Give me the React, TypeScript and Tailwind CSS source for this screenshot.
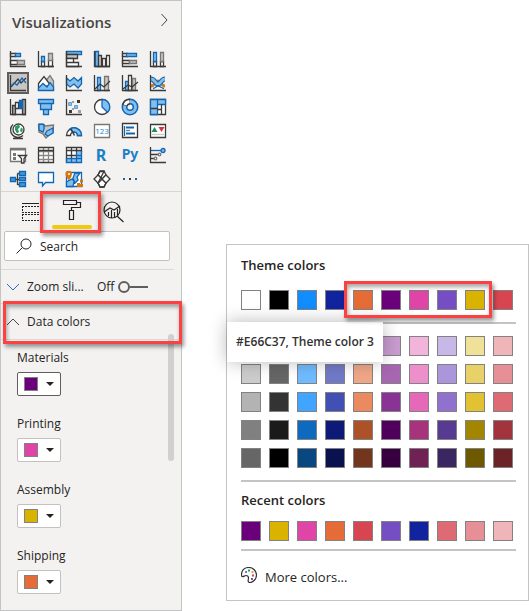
import type { ReactNode } from "react";

const D = "#3b3a39";
const B = "#1267b4";
const L = "#83beec";
const G = "#c8c6c4";

const axes = <path d="M.5 0V15.5H16" fill="none" stroke={D} />;

type Visual = { name: string; art: ReactNode };

const visuals: Visual[] = [
  {
    name: "Stacked bar chart",
    art: (
      <g>
        <path d="M.5 2.5H5.5V5.5H.5zM.5 9.5H7.5V13.5H.5z" fill="#fff" stroke={D} />
        <path d="M5.5 2.5H10.5V5.5H5.5z" fill={L} stroke={B} />
        <path d="M7.5 9.5H14.5V13.5H7.5z" fill={G} stroke="#797775" />
        {axes}
      </g>
    ),
  },
  {
    name: "Stacked column chart",
    art: (
      <g>
        <path d="M3.5 10.5H6.5V15.5H3.5zM10.5 8.5H14.5V15.5H10.5z" fill="#fff" stroke={D} />
        <path d="M3.5 5.5H6.5V10.5H3.5z" fill={L} stroke={B} />
        <path d="M10.5 2.5H14.5V9.5H10.5z" fill={G} stroke="#797775" />
        {axes}
      </g>
    ),
  },
  {
    name: "Clustered bar chart",
    art: (
      <g>
        <path d="M.5 .5H15.5V3.5H.5z" fill={L} stroke={B} />
        <path d="M.5 3.5H11.5V7.5H.5z" fill={G} stroke={D} />
        <path d="M.5 7.5H7.5V11.5H.5zM.5 11.5H12.5V15.5H.5z" fill="#fff" stroke={D} />
        {axes}
      </g>
    ),
  },
  {
    name: "Clustered column chart",
    art: (
      <g>
        <path d="M1.5 .5H4.5V15.5H1.5z" fill={L} stroke={B} />
        <path d="M4.5 4.5H7.5V15.5H4.5z" fill={G} stroke={D} />
        <path d="M8.5 7.5H11.5V15.5H8.5zM12.5 4.5H15.5V15.5H12.5z" fill="#fff" stroke={D} />
        {axes}
      </g>
    ),
  },
  {
    name: "100% stacked bar chart",
    art: (
      <g>
        <path d="M.5 2.5H5.5V5.5H.5zM.5 9.5H7.5V12.5H.5z" fill="#fff" stroke={D} />
        <path d="M4.5 2.5H14.5V5.5H4.5z" fill={L} stroke={B} />
        <path d="M7.5 9.5H14.5V12.5H7.5z" fill={G} stroke="#797775" />
        {axes}
      </g>
    ),
  },
  {
    name: "100% stacked column chart",
    art: (
      <g>
        <path d="M3.5 10.5H6.5V15.5H3.5zM10.5 10.5H13.5V15.5H10.5z" fill="#fff" stroke={D} />
        <path d="M3.5 1.5H6.5V10.5H3.5z" fill={L} stroke={B} />
        <path d="M10.5 1.5H13.5V10.5H10.5z" fill={G} stroke="#797775" />
        {axes}
      </g>
    ),
  },
  {
    name: "Line chart",
    art: (
      <g fill="none">
        <path d="M1 12 8 4 11 8 16 3" stroke={D} />
        <path d="M1 11 4 8 7 10 12 3 16 8" stroke={B} />
        {axes}
      </g>
    ),
  },
  {
    name: "Area chart",
    art: (
      <g>
        <path d="M5 9 12 .5 15.5 6V15H5z" fill={G} stroke="#797775" />
        <path d="M.5 8.5 6 1.5 12 9.500 .5 15z" fill="#fff" stroke={D} />
        <path d="M.5 15.5V13L5 8.5 9 12 12 7.5 15.5 12V15.5z" fill={L} stroke={B} />
      </g>
    ),
  },
  {
    name: "Stacked area chart",
    art: (
      <g>
        <path d="M.5 3 4 6 8 2.5 12 6 15.5 2.5V9L12 13 8 9 4 12 .5 9z" fill={L} stroke={B} />
        {axes}
      </g>
    ),
  },
  {
    name: "Line and stacked column chart",
    art: (
      <g>
        <path d="M3.5 2.5H6.5V15.5H3.5z" fill={L} stroke={B} />
        <path d="M10.5 1.5H14.5V15.5H10.5z" fill={G} stroke="#797775" />
        <path d="M1 14 6 9 10 12 16 6" fill="none" stroke={D} />
        {axes}
      </g>
    ),
  },
  {
    name: "Line and clustered column chart",
    art: (
      <g>
        <path d="M3.5 6.5H6.5V15.5H3.5z" fill={L} stroke={B} />
        <path d="M6.5 .5H9.5V15.5H6.5z" fill="#fff" stroke={D} />
        <path d="M10.5 3.5H13.5V15.5H10.5z" fill={G} stroke="#797775" />
        <path d="M1 14 6 10 10 12 16 7" fill="none" stroke={D} />
        {axes}
      </g>
    ),
  },
  {
    name: "Ribbon chart",
    art: (
      <g>
        <path d="M1 11C5 11 5 6 8 6S11 11 15 11" fill="none" stroke="#d87a1c" strokeWidth="3" />
        <path d="M1 4C5 4 5 9 8 9S11 4 15 4" fill="none" stroke={B} strokeWidth="5" />
        <path d="M1 4C5 4 5 9 8 9S11 4 15 4" fill="none" stroke={L} strokeWidth="3" />
        <path d="M3 13.5C6 13 6 11 8 11S11 13 14 13.5" fill="none" stroke={B} />
        {axes}
      </g>
    ),
  },
  {
    name: "Waterfall chart",
    art: (
      <g>
        <path d="M2.5 6.5H5.5V15.5H2.5zM12.5 .5H15.5V15.5H12.5z" fill="#a19f9d" stroke={D} />
        <path d="M5.5 3.5H8.5V9.5H5.5z" fill="#fff" stroke={D} />
        <path d="M9.5 1.5H12.5V9.5H9.5z" fill={B} stroke={B} />
        {axes}
      </g>
    ),
  },
  {
    name: "Funnel chart",
    art: (
      <g fill={L} stroke={B}>
        <path d="M.5 .5H15.5V4.5H.5zM2.5 4.5H13.5V10.5H2.5zM5.5 10.5H10.5V15.5H5.5z" />
      </g>
    ),
  },
  {
    name: "Scatter chart",
    art: (
      <g>
        <path d="M11 1H14V4H11zM3 11H6V14H3z" fill={D} />
        <path d="M2.500 3.5H5.5V6.5H2.500zM8.500 6.5H11.500V9.5H8.500z" fill={L} stroke={B} strokeWidth=".5" />
        <path d="M6 2H8V4H6zM12 11H15V14H12zM6 9H8V11H6z" fill="#a19f9d" />
        {axes}
      </g>
    ),
  },
  {
    name: "Pie chart",
    art: (
      <g>
        <circle cx="8" cy="8" r="7.5" fill="#fff" stroke={D} />
        <path d="M8 8V.5A7.5 7.5 0 0 1 13.5 13.3z" fill={L} stroke={B} />
      </g>
    ),
  },
  {
    name: "Donut chart",
    art: (
      <g>
        <circle cx="8" cy="8" r="5.5" fill="none" stroke={B} strokeWidth="6" />
        <circle cx="8" cy="8" r="5.5" fill="none" stroke={L} strokeWidth="3" />
        <path d="M8 2.5A5.5 5.5 0 0 0 2.8 6.5" fill="none" stroke={D} strokeWidth="6" />
        <path d="M7.5 2.5A5.5 5.5 0 0 0 3 6" fill="none" stroke="#fff" strokeWidth="3" />
      </g>
    ),
  },
  {
    name: "Treemap",
    art: (
      <g>
        <path d="M.5 .5H15.5V15.5H.5z" fill="#fff" stroke={D} />
        <path d="M.5 .5H7.5V15.5H.5zM7.5 .5H15.5V5.5H7.5z" fill={L} stroke={B} />
        <path d="M.5 9.5H7.5M7.5 10.5H11.5M11.5 5.5V15.5" stroke={D} />
      </g>
    ),
  },
  {
    name: "Map",
    art: (
      <g>
        <circle cx="8.5" cy="6.5" r="5.5" fill="#fff" stroke={D} />
        <path d="M5 3.500 9 1.500 10 4 8 6 9 9 7 10.500 5 7zM11 4.500 13 6 12 9.500 10 8z" fill="#2b9b62" />
        <path d="M3 1.500A7.3 7.3 0 0 0 13 12.500M8 14V15.5M3 15.5H13" fill="none" stroke={D} strokeWidth="1.3" />
      </g>
    ),
  },
  {
    name: "Filled map",
    art: (
      <g>
        <path d="M.5 2 5 1 7 3 15.5 2 15 10 11 12 8 15 5 11 1 9z" fill={G} stroke="#797775" />
        <path d="M1 1 6 1.500 6 6 5 9 1 7zM9 8 15 5 15 10 10 13 7 11z" fill={L} stroke={B} />
      </g>
    ),
  },
  {
    name: "Gauge",
    art: (
      <g>
        <path d="M.5 12.5A7.5 7.5 0 0 1 15.5 12.5H11.5A3.5 3.5 0 0 0 4.5 12.5z" fill="#fff" stroke={D} />
        <path d="M4 6A7.5 7.5 0 0 1 15.5 12.5H11.5A3.5 3.5 0 0 0 7 9z" fill={L} stroke={B} />
        <path d="M8.5 12.5 5 6" stroke={D} strokeWidth="1.5" />
      </g>
    ),
  },
  {
    name: "Card",
    art: (
      <g>
        <path d="M.5 1.5H15.5V14.5H.5z" fill="#fff" stroke="#797775" />
        <text x="8" y="11" textAnchor="middle" fontSize="8" fill="#1c86d1" className="font-['Open_Sans',sans-serif]">123</text>
      </g>
    ),
  },
  {
    name: "Multi-row card",
    art: (
      <g>
        <path d="M.5 .5H15.5V14.5H.5z" fill="#fff" stroke={D} />
        <path d="M2.5 3V13" stroke={B} />
        <path d="M4 4.5H12M4 10.5H13" stroke={B} strokeWidth="2" />
        <path d="M4 7.5H8" stroke="#797775" />
      </g>
    ),
  },
  {
    name: "KPI",
    art: (
      <g>
        <path d="M.5 1.5H15.5V14.5H.5z" fill="#fff" stroke={D} />
        <path d="M1.500 9 4.500 4 7.5 9z" fill="#1c9151" />
        <path d="M8.500 4H14.500L11.5 9z" fill="#d9303e" />
        <path d="M2 11.5H14" stroke={G} />
      </g>
    ),
  },
  {
    name: "Slicer",
    art: (
      <g>
        <path d="M.5 1.5H15.5V14.5H.5z" fill="#fff" stroke="#797775" />
        <path d="M.5 2.5H15.5" stroke="#797775" strokeWidth="2" />
        <path d="M3 6H6V9H3zM3 10H6V13H3z" fill="#797775" />
        <path d="M8.5 8.5H16.5L14 11.5V16H11.5V11.5z" fill="#fff" stroke={D} />
      </g>
    ),
  },
  {
    name: "Table",
    art: (
      <g>
        <path d="M.5 .5H15.5V15.5H.5z" fill="#fff" />
        <path d="M.5 4.500H15.5M.5 8.5H15.5M.5 12.5H15.5M5.5 .5V15.5M10.5 .5V15.5" stroke="#8a8886" />
        <path d="M.5 .5H15.5V15.5H.5zM.5 3.500H15.500" fill="none" stroke={D} />
      </g>
    ),
  },
  {
    name: "Matrix",
    art: (
      <g>
        <path d="M.5 .5H15.5V15.5H.5z" fill="#fff" />
        <path d="M10 4H15.5V15.5H10zM.5 11H15.5V15.5H.5z" fill={L} />
        <path d="M.5 15.5V.5H15.5V5M.5 3.5H15.5M5.5 .5V11M10.5 .5V5M.5 8.5H10" fill="none" stroke={D} />
        <path d="M10.5 5V15.5M15.5 4V15.5H.5V11.5H15.5M10 8.5H15.5M5.5 11V15.5" fill="none" stroke={B} />
      </g>
    ),
  },
  {
    name: "R script visual",
    art: <text x="7" y="14" textAnchor="middle" fontSize="16" fontWeight="700" fill="#1c80c5" className="font-['Noto_Sans',sans-serif]">R</text>,
  },
  {
    name: "Python visual",
    art: <text x="8" y="12" textAnchor="middle" fontSize="14" fontWeight="700" fill="#1c80c5" className="font-['Noto_Sans',sans-serif]">Py</text>,
  },
  {
    name: "Key influencers",
    art: (
      <g fill="none">
        <path d="M1 3.5H11" stroke={B} />
        <path d="M1 7.5H8M1 11.5H4" stroke={D} />
        <circle cx="13" cy="3.5" r="2" fill={L} stroke={B} />
        <circle cx="9.5" cy="7.5" r="1.3" stroke="#797775" />
        <circle cx="5.5" cy="11.5" r="1.3" stroke="#797775" />
        {axes}
      </g>
    ),
  },
  {
    name: "Decomposition tree",
    art: (
      <g>
        <path d="M5 8.5H9M7.5 2.5V14M7.5 2.5H10M7.5 13.5H10" fill="none" stroke={D} />
        <path d="M.5 6.5H5.5V10.5H.5z" fill="#4197d9" stroke={B} />
        <path d="M9.5 .5H15.5V4.5H9.5zM9.5 6.5H15.5V9.5H9.5zM9.5 11.5H15.5V15.5H9.5z" fill="#4197d9" stroke={B} />
      </g>
    ),
  },
  {
    name: "Q&A",
    art: <path d="M.5 1.5H15.5V11.5H7.5L4.5 15V11.5H.5z" fill="#fff" stroke={B} />,
  },
  {
    name: "ArcGIS Maps",
    art: (
      <g>
        <path d="M.5 1.5H15.5V15.5H.5z" fill="#fff" stroke={B} />
        <path d="M.5 15.5V11L6 8 8 10 7 15.5zM9 2 14 2 11 6 12 9 9 12 7 7z" fill={L} stroke={B} />
        <path d="M-.5 3A3 3 0 0 1 6 3Q6 6 3 9.500-.5 6-.5 3z" fill="#d87510" />
        <circle cx="3" cy="3" r="1" fill="#fff" />
        <path d="M11 12H14V16H11zM14 8.500H17V11.500H14zM14 13H17V16H14z" fill="#d87510" />
      </g>
    ),
  },
  {
    name: "Power Apps",
    art: (
      <g fill="#fff" stroke={D}>
        <path d="M8 8 4 4 6 0H10L12 4zM8 8 4 12 6 16H10L12 12z" />
        <path d="M4 4 0 8 4 12 8 8zM12 4 16 8 12 12 8 8z" />
        <path d="M4 4 6 .5H10L4 12 6 16H10L12 12" fill="none" />
      </g>
    ),
  },
  {
    name: "More visuals",
    art: (
      <g>
        <path d="M1 7H3V9H1z" fill={B} />
        <path d="M7 7H9V9H7z" fill={D} />
        <path d="M13 7H15V9H13z" fill={B} />
      </g>
    ),
  },
];

const series = [
  { name: "Materials", color: "#6b007b", active: true },
  { name: "Printing", color: "#e044a7", active: false },
  { name: "Assembly", color: "#d9b300", active: false },
  { name: "Shipping", color: "#e66c37", active: false },
];

const theme = ["#ffffff", "#000000", "#118dff", "#12239e", "#e66c37", "#6b007b", "#e044a7", "#744ec2", "#d9b300", "#d64550"];

const shades = [
  ["#e6e6e6", "#999999", "#a0d1ff", "#a0a7dc", "#f5c4af", "#c99ccf", "#f3b4dc", "#c7b8e7", "#f0e199", "#efb5b9"],
  ["#cccccc", "#666666", "#70bbff", "#717ac7", "#f0a787", "#a666b0", "#ec8fca", "#ab95db", "#e8d166", "#e68f96"],
  ["#b3b3b3", "#333333", "#41a4ff", "#424fb3", "#eb895f", "#893395", "#e669b9", "#9071ce", "#e1c233", "#de6a73"],
  ["#808080", "#1a1a1a", "#0d6abf", "#0e1a77", "#ad5129", "#50005c", "#a8337d", "#573b92", "#a38600", "#a1343c"],
  ["#666666", "#000000", "#094780", "#09124f", "#73361c", "#36003e", "#702254", "#3a2761", "#6d5a00", "#6b2328"],
];

const recent = ["#6b007b", "#d9b300", "#e044a7", "#e66c37", "#d64550", "#744ec2", "#12239e", "#de6a73", "#e68f96", "#efb5b9"];

const frame = "pointer-events-none absolute border-3 border-[#fd4141] shadow-[2px_3px_4px_rgba(0,0,0,0.4),inset_1px_3px_4px_rgba(0,0,0,0.35)]";

function Chevron({ d, color = "#484644" }: { d: string; color?: string }) {
  return (
    <svg viewBox="0 0 12 12" className="size-3 shrink-0 overflow-visible" fill="none" stroke={color} aria-hidden="true">
      <path d={d} />
    </svg>
  );
}

function SwatchRow({ colors }: { colors: string[] }) {
  return (
    <div className="flex gap-2">
      {colors.map((c, i) => (
        <button key={i} type="button" aria-label={c} className="size-5 border border-[#828282]" style={{ backgroundColor: c }} />
      ))}
    </div>
  );
}

function Visualizations() {
  return (
    <aside className="flex w-[182px] shrink-0 flex-col border border-[#c4c4c4] bg-[#f3f2f1]">
      <header className="flex h-[41px] items-center justify-between pr-[11px] pl-[11px]">
        <h1 className="text-[15px] font-semibold text-[#484644]">Visualizations</h1>
        <button type="button" aria-label="Collapse" className="-mt-1">
          <Chevron d="M3.5 0 9 6 3.5 12" />
        </button>
      </header>

      <div className="mt-[5px] grid grid-cols-[repeat(6,28px)] auto-rows-[24px] px-[3px]">
        {visuals.map((v) => (
          <button
            key={v.name}
            type="button"
            aria-label={v.name}
            className={
              v.name === "Line chart"
                ? "ml-[3px] flex size-[22px] items-center justify-center self-center border-2 border-[#605e5c] bg-[#c8c6c4]"
                : "flex items-center justify-start pl-[6px]"
            }
          >
            <svg viewBox="0 0 17 17" strokeWidth="1.3" className="size-[17px] shrink-0 overflow-visible">{v.art}</svg>
          </button>
        ))}
      </div>

      <div className="relative flex h-10 border-t border-[#d8d6d4] pt-1">
        <button type="button" aria-label="Fields" className="flex h-8 w-10 items-center justify-end">
          <svg viewBox="0 0 20 20" className="size-5" fill="none" stroke="#252423">
            <path d="M1 1.5H18" />
            <path d="M1 4.5H18M1 10.5H18M1 12.5H18M1 18.5H18M1.5 4V10M1.5 12V18" strokeDasharray="2 1" />
          </svg>
        </button>
        <button type="button" aria-label="Format" className="flex w-[62px] flex-col items-center">
          <svg viewBox="0 0 20 22" className="mt-[3px] h-[22px] w-5" fill="none" stroke="#252423" strokeWidth="1.2">
            <path d="M1.5 1.5H14.5V5.5H1.5zM14.5 3.5H18.5V8.5H9.5V11M7.5 11.5H11.5V20.5H7.5z" />
          </svg>
          <span className="mt-1 h-1 w-10 rounded-full bg-[#f2c811]" />
        </button>
        <button type="button" aria-label="Analytics" className="flex h-8 w-6 items-center">
          <svg viewBox="0 0 22 22" className="size-[22px] shrink-0" fill="none" stroke="#252423" strokeWidth="1.2">
            <circle cx="9" cy="9" r="8" />
            <path d="M14 15 20.500 21M1 11 7 7 11 9 17 5M5.5 11V15M8.5 9V17M11.500 11V16M14.5 8V14" />
          </svg>
        </button>
        <div className={`${frame} -top-px left-[39px] h-[42px] w-[61px]`} />
      </div>

      <label className="mr-[11px] ml-[3px] flex h-[30px] shrink-0 items-center gap-2 rounded-xs border border-[#c4c2c0] bg-white pl-[11px]">
        <svg viewBox="0 0 16 16" className="size-4 shrink-0" fill="none" stroke="#252423">
          <circle cx="10" cy="6" r="5" />
          <path d="M6.5 9.5 .5 15.5" />
        </svg>
        <input type="search" placeholder="Search" aria-label="Search" className="w-full min-w-0 pt-px text-xs outline-none placeholder:text-[#252423]" />
      </label>

      <div className="relative mt-2 flex-1">
        <div className="mr-[7px] flex h-[34px] items-center border-t border-[#dcdad8] pl-1.5">
          <button type="button" className="flex w-[84px] items-center gap-2">
            <Chevron d="M0 3 6 9 12 3" color="#2b6cb0" />
            <span>Zoom sli...</span>
          </button>
          <label className="ml-[6px] flex items-center gap-1">
            <span>Off</span>
            <input type="checkbox" role="switch" className="peer sr-only" />
            <span className="flex items-center">
              <span className="size-3 rounded-full border-2 border-[#605e5c]" />
              <span className="h-0.5 w-[18px] bg-[#605e5c]" />
            </span>
          </label>
        </div>
        <div className="relative h-[37px] border-y border-[#dcdad8] pl-1.5">
          <button type="button" aria-expanded="true" className="flex h-full items-center gap-2">
            <Chevron d="M0 9 6 3 12 9" />
            <span>Data colors</span>
          </button>
          <div className={`${frame} -top-[3px] left-[2px] z-10 h-[43px] w-[179px]`} />
        </div>
        <div className="flex flex-col gap-5 pt-2.5 pb-4 pl-4">
          {series.map((s) => (
            <div key={s.name} className="flex h-[46px] flex-col items-start justify-between">
              <span id={s.name} className="leading-4">{s.name}</span>
              <button
                type="button"
                aria-labelledby={s.name}
                aria-haspopup="true"
                className={`flex h-6 w-11 items-center gap-2 rounded-xs border bg-white pl-1.5 ${s.active ? "border-[#605e5c]" : "border-[#c4c2c0]"}`}
              >
                <span className="size-3.5 border border-[#828282]" style={{ backgroundColor: s.color }} />
                <svg viewBox="0 0 8 4" className="h-1 w-2" fill="#252423">
                  <path d="M0 0H8L4 4z" />
                </svg>
              </button>
            </div>
          ))}
        </div>
        <div className="absolute top-[65px] right-[7px] h-[127px] w-1.5 rounded-full bg-[#d2d0ce]" />
      </div>
    </aside>
  );
}

function ColorPicker() {
  return (
    <section className="mt-[244px] ml-11 max-w-[303px] flex-1 self-start border border-[#c4c4c4] bg-white pt-2.5 pr-3 pb-[11px] pl-3.5">
      <h2 className="text-[13px] leading-5 font-semibold">Theme colors</h2>
      <div className="relative mt-[15px]">
        <SwatchRow colors={theme} />
        <div className={`${frame} -top-[9px] left-[103px] z-20 h-[37px] w-[148px]`} />
        <div role="tooltip" className="absolute top-8 -left-3.5 z-10 flex h-10 w-[156px] items-center justify-center bg-white text-xs font-semibold whitespace-nowrap text-[#323130] shadow-[0_0_18px_rgba(0,0,0,0.28)]">
          #E66C37, Theme color 3
        </div>
      </div>
      <hr className="mt-3 border-t-2 border-[#c4c4c4]" />
      <div className="mt-3 flex flex-col gap-2">
        {shades.map((row, i) => (
          <SwatchRow key={i} colors={row} />
        ))}
      </div>
      <hr className="mt-3 border-t-2 border-[#c4c4c4]" />
      <h2 className="mt-2 text-[13px] leading-5 font-semibold">Recent colors</h2>
      <div className="mt-[11px]">
        <SwatchRow colors={recent} />
      </div>
      <hr className="mt-2 border-t-2 border-[#c4c4c4]" />
      <button type="button" className="mt-4 flex h-[22px] items-center gap-2 text-[13px]">
        <svg viewBox="0 0 16 16" className="mb-1.5 size-4" fill="none" stroke="#323130" strokeWidth="1.2">
          <path d="M.5 7C1 3 4 .5 8 .5S15.500 4 15.500 8 12 15.500 9 15.500C6 15.500 7.500 12.500 7.500 11S6.500 8.500 5 8.500 2.500 10 1.300 9.500.5 8 .5 7z" />
          <path d="M4 4H6V6H4z" fill="#3a96dd" stroke="none" />
          <path d="M7 2.500H9V4.500H7z" fill="#2b9b62" stroke="none" />
          <path d="M10.500 4H12.500V6H10.500z" fill="#e8a33d" stroke="none" />
          <path d="M11 7.500H13V9.500H11z" fill="#d64550" stroke="none" />
          <path d="M10 11H12V13H10z" fill="#744ec2" stroke="none" />
        </svg>
        More colors...
      </button>
    </section>
  );
}

export default function App() {
  return (
    <main className="flex min-h-screen bg-white font-['Open_Sans','Noto_Sans',sans-serif] text-xs text-[#252423]">
      <Visualizations />
      <ColorPicker />
    </main>
  );
}
